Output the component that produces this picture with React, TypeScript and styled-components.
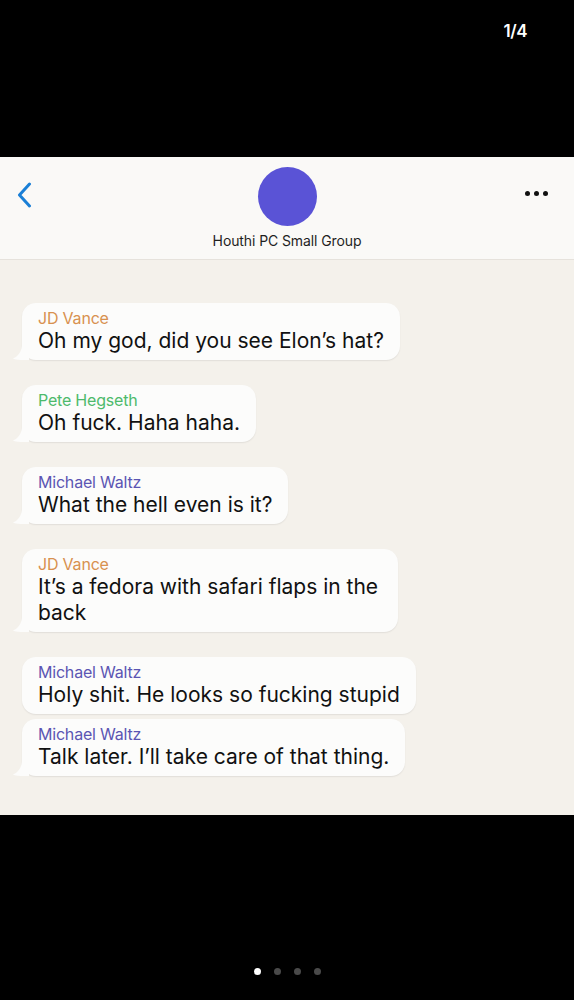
import React from "react"
import styled, { createGlobalStyle } from "styled-components"

const GlobalStyle = createGlobalStyle`
  html, body {
    margin: 0;
    padding: 0;
    background: #000;
  }
  body {
    font-family: Inter, "Liberation Sans", "Noto Sans", sans-serif;
    -webkit-font-smoothing: antialiased;
  }
`

const Screen = styled.div`
  width: 574px;
  height: 1000px;
  background: #000;
  display: flex;
  flex-direction: column;
`

const TopBar = styled.div`
  height: 157px;
  display: flex;
  justify-content: flex-end;
  padding: 21px 47px 0 0;
  box-sizing: border-box;
`

const Counter = styled.span`
  color: #fff;
  font-size: 17px;
  font-weight: 600;
  letter-spacing: -0.5px;
`

const Header = styled.header`
  height: 103px;
  background: #faf9f7;
  border-bottom: 1px solid #e6e2dc;
  box-sizing: border-box;
  display: grid;
  grid-template-columns: 60px 1fr 60px;
  align-items: start;
`

const BackButton = styled.div`
  padding: 25px 0 0 16px;
`

const Center = styled.div`
  display: flex;
  flex-direction: column;
  align-items: center;
  padding-top: 10px;
`

const Avatar = styled.div`
  width: 59px;
  height: 59px;
  border-radius: 50%;
  background: #5a53d6;
`

const Title = styled.div`
  margin-top: 6px;
  font-size: 14px;
  color: #1f1f1f;
  letter-spacing: -0.1px;
`

const MoreButton = styled.div`
  display: flex;
  justify-content: flex-end;
  gap: 4px;
  padding: 34px 26px 0 0;
`

const Dot = styled.span`
  width: 5px;
  height: 5px;
  border-radius: 50%;
  background: #111;
`

const Chat = styled.main`
  height: 555px;
  background: #f4f1eb;
  box-sizing: border-box;
  padding: 43px 0 0 22px;
  display: flex;
  flex-direction: column;
  align-items: flex-start;
`

const Bubble = styled.div<{ $grouped?: boolean; $width?: number }>`
  position: relative;
  background: #fcfcfb;
  border-radius: 14px;
  padding: 6px 16px 6px 16px;
  margin-bottom: ${(p) => (p.$grouped ? "5px" : "25px")};
  box-shadow: 0 1px 1.5px rgba(0, 0, 0, 0.08);
  ${(p) => (p.$width ? `width: ${p.$width}px; box-sizing: border-box;` : "")}
`

const Tail = styled.svg`
  position: absolute;
  left: -9px;
  bottom: 0;
`

const Name = styled.div<{ $color: string }>`
  color: ${(p) => p.$color};
  font-size: 16px;
  line-height: 19px;
  letter-spacing: -0.2px;
`

const Text = styled.div`
  color: #111;
  font-size: 21px;
  line-height: 26px;
  letter-spacing: 0;
`

const Footer = styled.div`
  flex: 1;
  display: flex;
  justify-content: center;
  align-items: flex-start;
  padding-top: 153px;
  gap: 13px;
`

const PageDot = styled.span<{ $active?: boolean }>`
  width: 7px;
  height: 7px;
  border-radius: 50%;
  background: ${(p) => (p.$active ? "#fff" : "#4a4a4a")};
`

const colors = {
  vance: "#d8914f",
  hegseth: "#4dba6b",
  waltz: "#5b55b3",
}

type Message = { name: string; color: string; text: string; grouped?: boolean; width?: number }

const messages: Message[] = [
  { name: "JD Vance", color: colors.vance, text: "Oh my god, did you see Elon\u2019s hat?" },
  { name: "Pete Hegseth", color: colors.hegseth, text: "Oh fuck. Haha haha." },
  { name: "Michael Waltz", color: colors.waltz, text: "What the hell even is it?" },
  { name: "JD Vance", color: colors.vance, text: "It\u2019s a fedora with safari flaps in the back", width: 376 },
  { name: "Michael Waltz", color: colors.waltz, text: "Holy shit. He looks so fucking stupid", grouped: true },
  { name: "Michael Waltz", color: colors.waltz, text: "Talk later. I\u2019ll take care of that thing." },
]

export default function App() {
  return (
    <>
      <GlobalStyle />
      <Screen>
        <TopBar>
          <Counter>1/4</Counter>
        </TopBar>
        <Header>
          <BackButton>
            <svg width="18" height="26" viewBox="0 0 18 26">
              <path d="M13.5 2 L3.5 13 L13.5 24" fill="none" stroke="#1a7fd6" strokeWidth="3" strokeLinecap="round" strokeLinejoin="round" />
            </svg>
          </BackButton>
          <Center>
            <Avatar />
            <Title>Houthi PC Small Group</Title>
          </Center>
          <MoreButton>
            <Dot />
            <Dot />
            <Dot />
          </MoreButton>
        </Header>
        <Chat>
          {messages.map((m, i) => (
            <Bubble key={i} $grouped={m.grouped} $width={m.width}>
              {!m.grouped && (
                <Tail width="16" height="14" viewBox="0 0 16 14">
                  <path d="M16 0 L16 14 L8 14 C4 14 1 13 0 12.5 C4 11 8 7 9 0 Z" fill="#fcfcfb" />
                </Tail>
              )}
              <Name $color={m.color}>{m.name}</Name>
              <Text>{m.text}</Text>
            </Bubble>
          ))}
        </Chat>
        <Footer>
          <PageDot $active />
          <PageDot />
          <PageDot />
          <PageDot />
        </Footer>
      </Screen>
    </>
  )
}
